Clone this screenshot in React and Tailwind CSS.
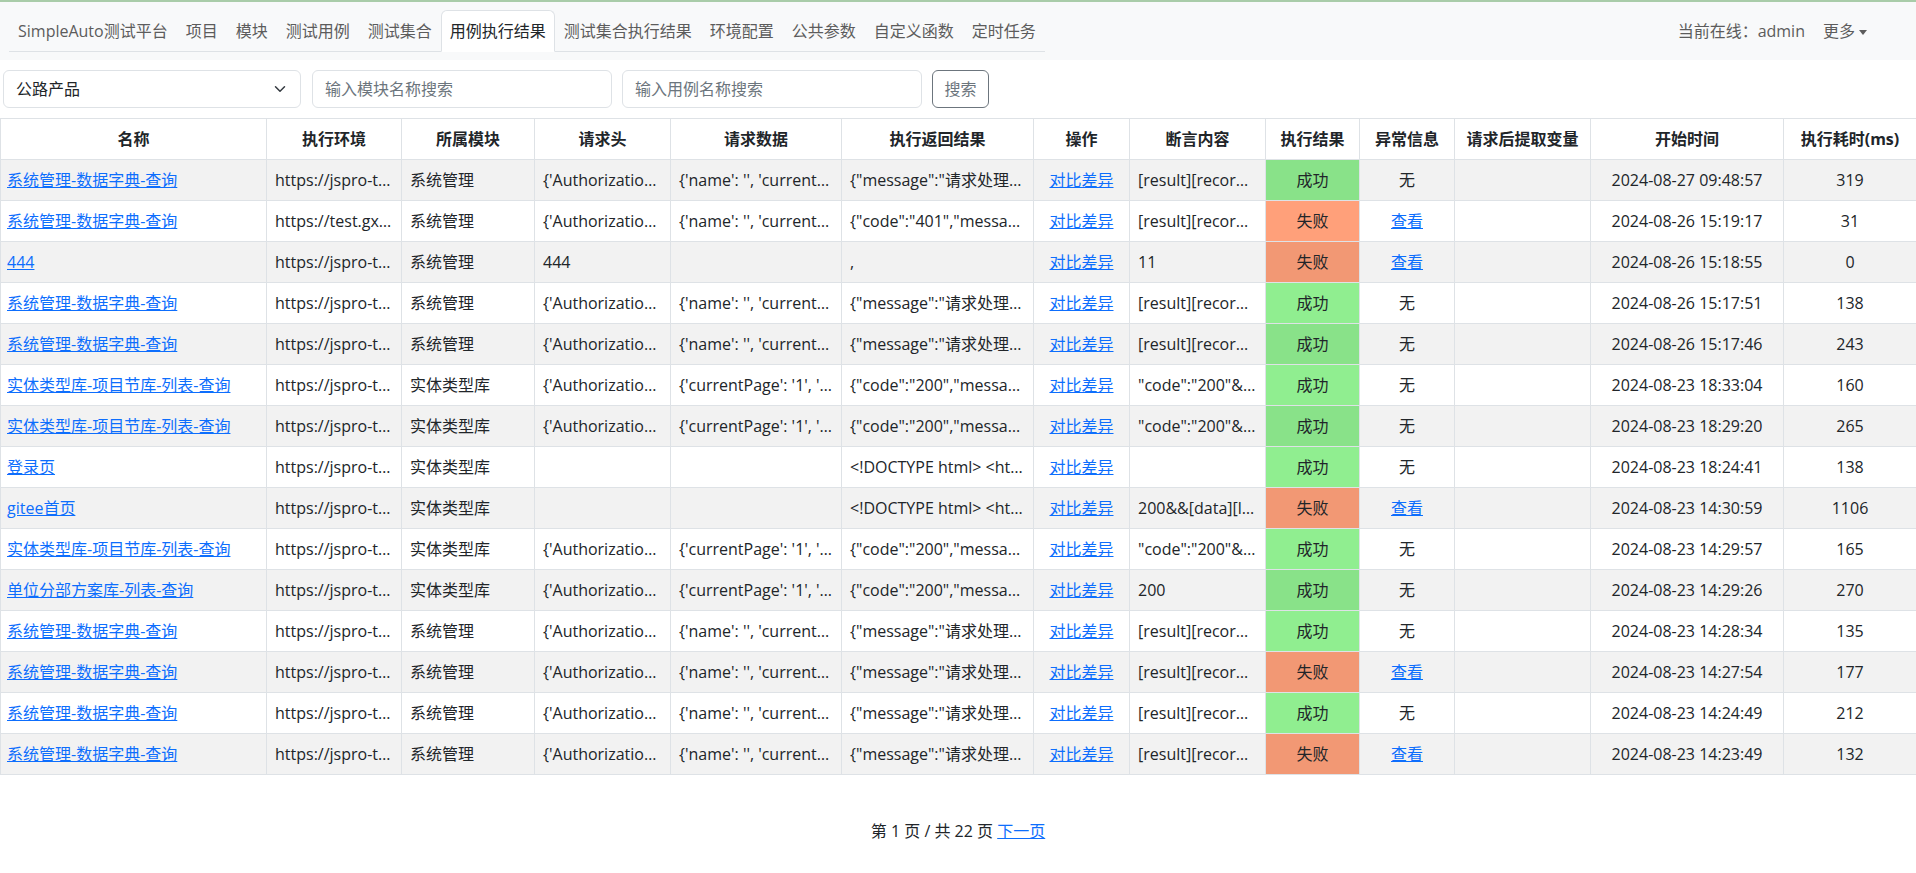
import React from 'react';

const font = "font-['Open_Sans','Noto_Sans_CJK_SC',sans-serif]";

const navItems = [
  'SimpleAuto测试平台',
  '项目',
  '模块',
  '测试用例',
  '测试集合',
  '用例执行结果',
  '测试集合执行结果',
  '环境配置',
  '公共参数',
  '自定义函数',
  '定时任务'
];

const ENV1 = 'https://jspro-test.gxcsjt.com/api';
const ENV2 = 'https://test.gxcsjt.com/api';
const AUTH = "{'Authorization': 'Bearer eyJhbGciOiJIUzI1NiJ9'}";
const NAME_DATA = "{'name': '', 'currentPage': '1', 'pageSize': '10'}";
const PAGE_DATA = "{'currentPage': '1', 'pageSize': '10'}";
const MSG = '{"message":"请求处理成功","code":"200"}';
const C401 = '{"code":"401","message":"未授权"}';
const C200 = '{"code":"200","message":"操作成功"}';
const HTML = '<!DOCTYPE html>  <html lang="zh">';
const REC = '[result][records][0][name]';
const CODE = '"code":"200"&&"message"';

const rows = [
  { name: '系统管理-数据字典-查询', env: ENV1, mod: '系统管理', head: AUTH, data: NAME_DATA, res: MSG, assert: REC, ok: true, time: '2024-08-27 09:48:57', cost: 319 },
  { name: '系统管理-数据字典-查询', env: ENV2, mod: '系统管理', head: AUTH, data: NAME_DATA, res: C401, assert: REC, ok: false, time: '2024-08-26 15:19:17', cost: 31 },
  { name: '444', env: ENV1, mod: '系统管理', head: '444', data: '', res: ',', assert: '11', ok: false, time: '2024-08-26 15:18:55', cost: 0 },
  { name: '系统管理-数据字典-查询', env: ENV1, mod: '系统管理', head: AUTH, data: NAME_DATA, res: MSG, assert: REC, ok: true, time: '2024-08-26 15:17:51', cost: 138 },
  { name: '系统管理-数据字典-查询', env: ENV1, mod: '系统管理', head: AUTH, data: NAME_DATA, res: MSG, assert: REC, ok: true, time: '2024-08-26 15:17:46', cost: 243 },
  { name: '实体类型库-项目节库-列表-查询', env: ENV1, mod: '实体类型库', head: AUTH, data: PAGE_DATA, res: C200, assert: CODE, ok: true, time: '2024-08-23 18:33:04', cost: 160 },
  { name: '实体类型库-项目节库-列表-查询', env: ENV1, mod: '实体类型库', head: AUTH, data: PAGE_DATA, res: C200, assert: CODE, ok: true, time: '2024-08-23 18:29:20', cost: 265 },
  { name: '登录页', env: ENV1, mod: '实体类型库', head: '', data: '', res: HTML, assert: '', ok: true, time: '2024-08-23 18:24:41', cost: 138 },
  { name: 'gitee首页', env: ENV1, mod: '实体类型库', head: '', data: '', res: HTML, assert: '200&&[data][list]', ok: false, time: '2024-08-23 14:30:59', cost: 1106 },
  { name: '实体类型库-项目节库-列表-查询', env: ENV1, mod: '实体类型库', head: AUTH, data: PAGE_DATA, res: C200, assert: CODE, ok: true, time: '2024-08-23 14:29:57', cost: 165 },
  { name: '单位分部方案库-列表-查询', env: ENV1, mod: '实体类型库', head: AUTH, data: PAGE_DATA, res: C200, assert: '200', ok: true, time: '2024-08-23 14:29:26', cost: 270 },
  { name: '系统管理-数据字典-查询', env: ENV1, mod: '系统管理', head: AUTH, data: NAME_DATA, res: MSG, assert: REC, ok: true, time: '2024-08-23 14:28:34', cost: 135 },
  { name: '系统管理-数据字典-查询', env: ENV1, mod: '系统管理', head: AUTH, data: NAME_DATA, res: MSG, assert: REC, ok: false, time: '2024-08-23 14:27:54', cost: 177 },
  { name: '系统管理-数据字典-查询', env: ENV1, mod: '系统管理', head: AUTH, data: NAME_DATA, res: MSG, assert: REC, ok: true, time: '2024-08-23 14:24:49', cost: 212 },
  { name: '系统管理-数据字典-查询', env: ENV1, mod: '系统管理', head: AUTH, data: NAME_DATA, res: MSG, assert: REC, ok: false, time: '2024-08-23 14:23:49', cost: 132 }
];

const columns = [
  ['名称', 'w-[266px]'],
  ['执行环境', 'w-[135px]'],
  ['所属模块', 'w-[133px]'],
  ['请求头', 'w-[136px]'],
  ['请求数据', 'w-[171px]'],
  ['执行返回结果', 'w-[192px]'],
  ['操作', 'w-[96px]'],
  ['断言内容', 'w-[136px]'],
  ['执行结果', 'w-[94px]'],
  ['异常信息', 'w-[95px]'],
  ['请求后提取变量', 'w-[136px]'],
  ['开始时间', 'w-[193px]'],
  ['执行耗时(ms)', 'w-[133px]']
];

const td = 'border border-[#dee2e6] px-2 py-2 leading-6';
const clip = 'whitespace-nowrap overflow-hidden text-ellipsis';
const link = 'text-[#0d6efd] underline';

function ResultCell({ ok, striped }) {
  let bg;
  if (ok) bg = striped ? 'bg-[#89e289]' : 'bg-[#90ee90]';
  else bg = striped ? 'bg-[#f29874]' : 'bg-[#ffa07a]';
  return <td className={`${td} ${bg} text-center`}>{ok ? '成功' : '失败'}</td>;
}

function App() {
  return (
    <div className={`${font} text-base text-[#212529] bg-white min-h-screen`}>
      {/* Navbar */}
      <nav className="flex items-center bg-[#f8f9fa] border-t-2 border-[#a9cca9] pt-2 pb-2 pl-[9px]">
        <ul className="flex border-b border-[#dee2e6]">
          {navItems.map(item => {
            const active = item === '用例执行结果';
            return (
              <li key={item} className="-mb-px">
                <a
                  className={`block px-[8px] py-2 leading-6 border rounded-t-md ${
                    active
                      ? 'bg-white border-[#dee2e6] border-b-white text-[#212529]'
                      : 'border-transparent text-[#5c5c5c]'
                  }`}
                >
                  {item}
                </a>
              </li>
            );
          })}
        </ul>
        <div className="ml-auto flex items-center gap-[18px] pr-[49px] text-[#5c5c5c] leading-6">
          <span>当前在线：admin</span>
          <span className="flex items-center">
            更多
            <span className="ml-[4px] mt-[2px] border-t-[5px] border-t-[#5c5c5c] border-x-[4px] border-x-transparent" />
          </span>
        </div>
      </nav>

      {/* Search */}
      <div className="flex items-center mt-[10px] pl-[3px]">
        <div className="w-[298px] h-[38px] border border-[#dee2e6] rounded-md flex items-center justify-between pl-3 pr-3 leading-6">
          <span>公路产品</span>
          <svg width="16" height="12" viewBox="0 0 16 16" fill="none">
            <path d="m2 5 6 6 6-6" stroke="#343a40" strokeWidth="2" strokeLinecap="round" strokeLinejoin="round" />
          </svg>
        </div>
        <input
          placeholder="输入模块名称搜索"
          className="ml-[11px] w-[300px] h-[38px] border border-[#dee2e6] rounded-md px-3 leading-6 outline-none placeholder:text-[#6c757d]"
        />
        <input
          placeholder="输入用例名称搜索"
          className="ml-[10px] w-[300px] h-[38px] border border-[#dee2e6] rounded-md px-3 leading-6 outline-none placeholder:text-[#6c757d]"
        />
        <button className="ml-[10px] w-[57px] h-[38px] border border-[#6c757d] rounded-md text-[#6c757d] leading-6">
          搜索
        </button>
      </div>

      {/* Table */}
      <table className="mt-[10px] w-full table-fixed border-collapse">
        <colgroup>
          {columns.map(([label, w]) => (
            <col key={label} className={w} />
          ))}
        </colgroup>
        <thead>
          <tr>
            {columns.map(([label]) => (
              <th key={label} className={`${td} font-bold text-center whitespace-nowrap`}>
                {label}
              </th>
            ))}
          </tr>
        </thead>
        <tbody>
          {rows.map((r, i) => {
            const striped = i % 2 === 0;
            return (
              <tr key={i} className={striped ? 'bg-[#f2f2f2]' : 'bg-white'}>
                <td className={`${td} pl-[6px] ${clip}`}>
                  <a className={link}>{r.name}</a>
                </td>
                <td className={`${td} ${clip}`}>{r.env}</td>
                <td className={`${td} ${clip}`}>{r.mod}</td>
                <td className={`${td} ${clip}`}>{r.head}</td>
                <td className={`${td} ${clip}`}>{r.data}</td>
                <td className={`${td} ${clip}`}>{r.res}</td>
                <td className={`${td} text-center`}>
                  <a className={link}>对比差异</a>
                </td>
                <td className={`${td} ${clip}`}>{r.assert}</td>
                <ResultCell ok={r.ok} striped={striped} />
                <td className={`${td} text-center`}>
                  {r.ok ? '无' : <a className={link}>查看</a>}
                </td>
                <td className={td}></td>
                <td className={`${td} text-center whitespace-nowrap`}>{r.time}</td>
                <td className={`${td} text-center`}>{r.cost}</td>
              </tr>
            );
          })}
        </tbody>
      </table>

      {/* Pagination */}
      <div className="mt-[44px] text-center leading-6">
        第 1 页 / 共 22 页 <a className={link}>下一页</a>
      </div>
    </div>
  );
}

export default App;
